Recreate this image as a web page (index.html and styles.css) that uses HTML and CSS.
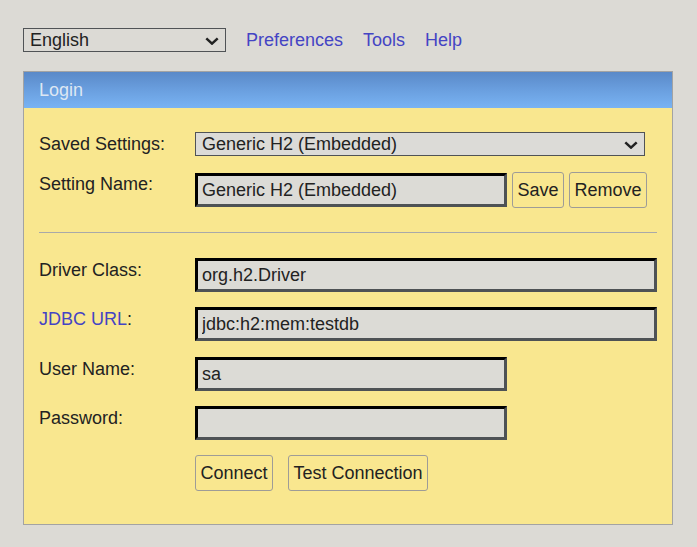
FILE: index.html
```html
<!DOCTYPE html>
<html lang="en">
<head>
<meta charset="utf-8">
<title>H2 Console</title>
<link rel="stylesheet" href="styles.css">
</head>
<body>
<div class="topbar">
  <div class="select-wrap lang">
    <select class="select"><option>English</option></select>
    <svg class="chev" width="14" height="8" viewBox="0 0 14 8"><path d="M1.3 1.3 L7 6.6 L12.7 1.3" fill="none" stroke="#222" stroke-width="2.5"/></svg>
  </div>
  <a class="link first" href="#">Preferences</a>
  <a class="link" href="#">Tools</a>
  <a class="link help" href="#">Help</a>
</div>
<div class="panel">
  <div class="panel-head">Login</div>
  <div class="panel-body">
    <div class="row">
      <div class="label">Saved Settings:</div>
      <div class="select-wrap saved">
        <select class="select gray"><option>Generic H2 (Embedded)</option></select>
        <svg class="chev" width="14" height="8" viewBox="0 0 14 8"><path d="M1.3 1.3 L7 6.6 L12.7 1.3" fill="none" stroke="#222" stroke-width="2.5"/></svg>
      </div>
    </div>
    <div class="row center">
      <div class="label">Setting Name:</div>
      <input class="input short" type="text" value="Generic H2 (Embedded)">
      <button class="btn ml5">Save</button>
      <button class="btn ml5">Remove</button>
    </div>
    <hr class="sep">
    <div class="row">
      <div class="label">Driver Class:</div>
      <input class="input long" type="text" value="org.h2.Driver">
    </div>
    <div class="row">
      <div class="label"><a class="link" href="#">JDBC URL</a>:</div>
      <input class="input long" type="text" value="jdbc:h2:mem:testdb">
    </div>
    <div class="row gap16">
      <div class="label">User Name:</div>
      <input class="input short" type="text" value="sa">
    </div>
    <div class="row">
      <div class="label">Password:</div>
      <input class="input short" type="password" value="">
    </div>
    <div class="row">
      <div class="label"></div>
      <button class="btn">Connect</button>
      <button class="btn ml15">Test Connection</button>
    </div>
  </div>
</div>
</body>
</html>
```
FILE: styles.css
```css
html, body {
  margin: 0;
  padding: 0;
  background: #dcdad5;
}
body {
  padding: 28px 0 0 23px;
  font-family: "Liberation Sans", Arial, sans-serif;
  font-size: 18px;
  color: #222;
}
.topbar {
  display: flex;
  align-items: center;
  height: 24px;
}
.select-wrap {
  position: relative;
  display: block;
}
.select-wrap.lang { width: 203px; height: 24px; }
.select-wrap.saved { width: 450px; height: 24px; }
.select {
  appearance: none;
  -webkit-appearance: none;
  box-sizing: border-box;
  width: 100%;
  height: 100%;
  margin: 0;
  border: 1px solid #505356;
  border-radius: 0;
  background: #dcdad5;
  color: #222;
  font-family: "Liberation Sans", Arial, sans-serif;
  font-size: 18px;
  padding: 0 0 0 6px;
  line-height: 22px;
}
.select.gray { background: #dcdbd7; }
.chev {
  position: absolute;
  right: 7px;
  top: 8.5px;
  pointer-events: none;
}
.link {
  color: #4444c4;
  text-decoration: none;
}
.topbar .link { margin-left: 20px; }
.panel {
  box-sizing: border-box;
  width: 650px;
  margin-top: 19px;
  border: 1px solid #a3a3a3;
  background: #f9e78f;
}
.panel-head {
  height: 36px;
  line-height: 36px;
  padding-left: 15px;
  color: #dde7f3;
  background: linear-gradient(to bottom, #5a89c8 0%, #6a9fdf 50%, #79b3f3 100%);
}
.panel-body {
  display: flex;
  flex-direction: column;
  padding: 24px 15px 33px 15px;
}
.row {
  display: flex;
  align-items: flex-start;
}
.row + .row { margin-top: 15px; }
.row.gap16 { margin-top: 16px; }
.row.center { align-items: center; margin-top: 16px; }
.label {
  width: 156px;
  flex: none;
  padding-top: 2px;
  line-height: 21px;
}
.row.center .label { align-self: flex-start; padding-top: 2px; }
.input {
  box-sizing: border-box;
  height: 34px;
  margin: 0;
  padding: 0 4px;
  border-style: solid;
  border-width: 3px;
  border-color: #000 #4e5255 #4e5255 #000;
  background: #dcdbd6;
  color: #222;
  font-family: "Liberation Sans", Arial, sans-serif;
  font-size: 18px;
  outline: none;
}
.input.short { width: 312px; }
.input.long { width: 462px; }
.btn {
  box-sizing: border-box;
  height: 36px;
  margin: 0;
  padding: 0 4.5px;
  border: 1px solid #9e9c97;
  border-radius: 3px;
  background: #f9e78f;
  color: #222;
  font-family: "Liberation Sans", Arial, sans-serif;
  font-size: 18px;
}
.ml5 { margin-left: 5px; }
.ml15 { margin-left: 15px; }
.sep {
  margin: 24px 0 0 0;
  border: 0;
  height: 1px;
  background: #a9a9a9;
}
.sep + .row { margin-top: 25px; }
```
